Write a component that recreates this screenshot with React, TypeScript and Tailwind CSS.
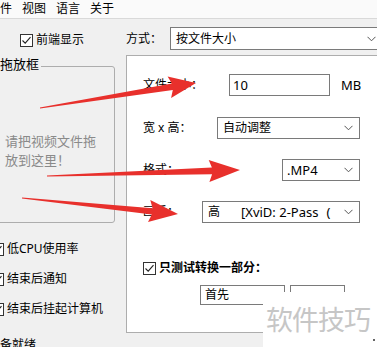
import React from "react";

type Pt = [number, number];

// tapered "hand drawn" arrow, thin at the tail, fat head at the tip
const arrowPoints = (tail: Pt, tip: Pt, headLen: number, headW: number, shaftW: number) => {
  const dx = tip[0] - tail[0];
  const dy = tip[1] - tail[1];
  const len = Math.hypot(dx, dy);
  const ux = dx / len;
  const uy = dy / len;
  const nx = -uy;
  const ny = ux;
  const bx = tip[0] - ux * headLen;
  const by = tip[1] - uy * headLen;
  const pts: Pt[] = [
    [tail[0] + nx * 0.6, tail[1] + ny * 0.6],
    [bx + nx * shaftW, by + ny * shaftW],
    [bx - ux * 3 + nx * headW, by - uy * 3 + ny * headW],
    tip,
    [bx - ux * 3 - nx * headW, by - uy * 3 - ny * headW],
    [bx - nx * shaftW, by - ny * shaftW],
    [tail[0] - nx * 0.6, tail[1] - ny * 0.6],
  ];
  return pts.map((p) => `${p[0].toFixed(1)},${p[1].toFixed(1)}`).join(" ");
};

const CheckBox = ({ className = "" }: { className?: string }) => (
  <span className={`w-[13px] h-[13px] border border-[#333] bg-white flex items-center justify-center shrink-0 ${className}`}>
    <svg width="11" height="11" viewBox="0 0 11 11">
      <polyline points="1.5,5.5 4.2,8.2 9.5,2.2" fill="none" stroke="#222" strokeWidth="1.1" />
    </svg>
  </span>
);

const Chevron = () => (
  <svg width="9" height="6" viewBox="0 0 9 6" className="shrink-0">
    <polyline points="0.5,0.8 4.5,4.8 8.5,0.8" fill="none" stroke="#555" strokeWidth="1" />
  </svg>
);

const Select = ({ w, children, pl = "pl-[5px]" }: { w: string; children: React.ReactNode; pl?: string }) => (
  <div className={`${w} h-[22px] border border-[#7a7a7a] bg-white flex items-center ${pl} pr-[6px] shrink-0`}>
    <div className="flex-1 flex items-center whitespace-nowrap">{children}</div>
    <Chevron />
  </div>
);

export default function App() {
  return (
    <div className="w-[377px] h-[347px] relative overflow-hidden bg-[#f0f0f0] text-[12px] leading-none text-black font-['Noto_Sans','Noto_Sans_CJK_SC',sans-serif]">
      {/* menu */}
      <div className="h-[19px] bg-[#fafafa] border-b border-[#d9d9d9] flex items-center gap-[10px] ml-[-12px]">
        <span>文件</span>
        <span>视图</span>
        <span>语言</span>
        <span>关于</span>
      </div>

      <div className="flex">
        {/* left column */}
        <div className="w-[126px] shrink-0 flex flex-col">
          <div className="mt-[14px] pl-[20px] h-[14px] flex items-center gap-[3px]">
            <CheckBox />
            <span>前端显示</span>
          </div>

          <div className="relative mt-[19px] ml-[-4px] w-[119px] h-[157px] border border-[#adadad] rounded-[3px]">
            <span className="absolute left-[3px] top-[-9px] bg-[#f0f0f0] pr-[2px] text-[13px]">拖放框</span>
            <div className="pt-[65px] pl-[8px] w-[104px] text-[13px] leading-[19px] text-[#8a8a8a]">
              请把视频文件拖放到这里！
            </div>
          </div>

          <div className="mt-[19px] flex flex-col gap-[16px]">
            <div className="h-[14px] flex items-center gap-[3px] ml-[-9px]">
              <CheckBox />
              <span>低CPU使用率</span>
            </div>
            <div className="h-[14px] flex items-center gap-[3px] ml-[-9px]">
              <CheckBox />
              <span>结束后通知</span>
            </div>
            <div className="h-[14px] flex items-center gap-[3px] ml-[-9px]">
              <CheckBox />
              <span>结束后挂起计算机</span>
            </div>
          </div>
          <div className="mt-[23px] ml-[-12px] whitespace-nowrap">准备就绪</div>
        </div>

        {/* right column */}
        <div className="flex-1 flex flex-col">
          <div className="mt-[8px] h-[23px] flex items-center">
            <span className="w-[44px] shrink-0">方式：</span>
            <div className="w-[213px] h-[23px] border border-[#7a7a7a] bg-white flex items-center pl-[5px] pr-[6px] shrink-0">
              <span className="flex-1">按文件大小</span>
              <Chevron />
            </div>
          </div>

          <div className="mt-[5px] w-[262px] h-[278px] border border-[#adadad] bg-white pl-[16px] flex flex-col">
            <div className="mt-[18px] h-[22px] flex items-center">
              <span className="w-[86px] shrink-0">文件大小：</span>
              <div className="w-[101px] h-[22px] border border-[#7a7a7a] flex items-center pl-[3px] text-[13px]">10</div>
              <span className="ml-[11px] text-[13px]">MB</span>
            </div>

            <div className="mt-[21px] h-[22px] flex items-center">
              <span className="w-[74px] shrink-0">宽 x 高：</span>
              <Select w="w-[143px]">自动调整</Select>
            </div>

            <div className="mt-[20px] h-[22px] flex items-center">
              <span className="w-[139px] shrink-0">格式：</span>
              <Select w="w-[78px]" pl="pl-[4px]">
                <span className="text-[13px]">.MP4</span>
              </Select>
            </div>

            <div className="mt-[20px] h-[22px] flex items-center">
              <span className="w-[59px] shrink-0">画质：</span>
              <Select w="w-[158px]">
                <span>高</span>
                <span className="ml-[21px] text-[13px]">[XviD: 2-Pass</span>
                <span className="ml-[8px] text-[13px]">(</span>
              </Select>
            </div>

            <div className="mt-[38px] h-[14px] flex items-center gap-[3px]">
              <CheckBox />
              <span className="font-bold">只测试转换一部分：</span>
            </div>

            <div className="mt-[10px] ml-[57px] h-[20px] flex items-start">
              <div className="w-[85px] h-[20px] border border-[#7a7a7a] flex items-center pl-[4px]">首先</div>
              <div className="ml-[5px] w-[55px] h-[20px] border border-[#7a7a7a]" />
              <span className="ml-[5px] text-[10px] leading-none text-[#555]">‥</span>
            </div>
          </div>
        </div>
      </div>

      {/* red annotation arrows */}
      <svg className="absolute inset-0 pointer-events-none" width="377" height="347" viewBox="0 0 377 347">
        <polygon points={arrowPoints([40, 108], [196, 83], 24, 11, 3.2)} fill="#e8302c" />
        <polygon points={arrowPoints([47, 176], [240, 170], 28, 11, 3.4)} fill="#e8302c" />
        <polygon points={arrowPoints([22, 198], [178, 214], 26, 11, 3.2)} fill="#e8302c" />
      </svg>

      {/* watermark */}
      <div className="absolute left-[263px] top-[292px] w-[114px] h-[55px] bg-white flex items-start pt-[13px] pl-[3px]">
        <span className="text-[27px] leading-none tracking-[-1px] text-[#c6c6c6] font-['Noto_Sans_CJK_SC',sans-serif]">软件技巧</span>
        <span className="absolute right-[2px] bottom-[6px] w-[2px] h-[2px] bg-[#333] rounded-full" />
      </div>
    </div>
  );
}
